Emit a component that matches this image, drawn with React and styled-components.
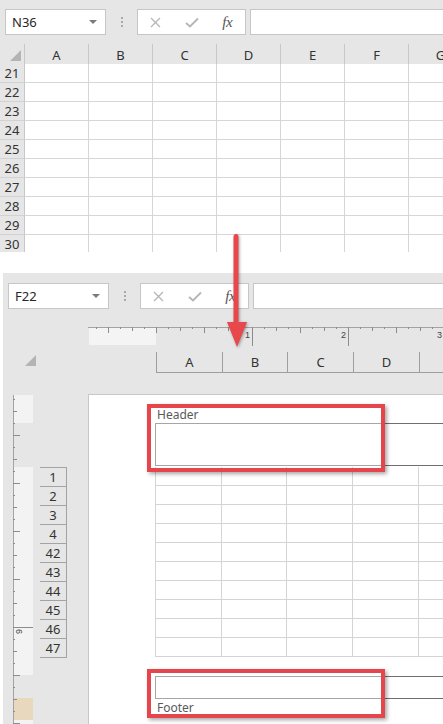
import React from "react";
import styled, { createGlobalStyle } from "styled-components";

const Global = createGlobalStyle`
  * { box-sizing: border-box; }
  html, body { margin: 0; padding: 0; background: #fff; }
  body { width: 443px; height: 724px; overflow: hidden; font-family: "Segoe UI", "Noto Sans", "Open Sans", sans-serif; color: #333; }
`;

const Root = styled.div`
  position: relative;
  width: 443px;
  height: 724px;
  overflow: hidden;
  display: flex;
  flex-direction: column;
`;

const Panel = styled.div`
  background: #e6e6e6;
  overflow: hidden;
  margin-left: ${(p) => p.$left || 0}px;
  height: ${(p) => p.$h}px;
  flex: none;
  display: flex;
  flex-direction: column;
`;

const WhiteGap = styled.div`
  height: 21px;
  flex: none;
  background: #fff;
`;

/* ---------- toolbar ---------- */
const Toolbar = styled.div`
  height: 44px;
  flex: none;
  display: flex;
  align-items: flex-start;
  padding: ${(p) => p.$top}px 0 0 5px;
`;

const NameBox = styled.div`
  width: 101px;
  height: 26px;
  background: #fff;
  border: 1px solid #c6c6c6;
  display: flex;
  align-items: center;
  justify-content: space-between;
  padding: 0 8px 0 6px;
  font-size: 13px;
  color: #262626;
`;

const Caret = styled.span`
  width: 0;
  height: 0;
  border-left: 4px solid transparent;
  border-right: 4px solid transparent;
  border-top: 4px solid #7b7b7b;
`;

const DotsSep = styled.div`
  width: 31px;
  height: 26px;
  display: flex;
  flex-direction: column;
  align-items: center;
  justify-content: center;
  gap: 2px;
`;

const Dot = styled.span`
  width: 2px;
  height: 2px;
  background: #a9a9a9;
`;

const FxGroup = styled.div`
  width: 109px;
  height: 26px;
  background: #fff;
  border: 1px solid #c6c6c6;
  display: flex;
`;

const IconSlot = styled.div`
  width: 36px;
  height: 100%;
  display: flex;
  align-items: center;
  justify-content: center;
`;

const FxText = styled.i`
  font-family: "Liberation Serif", "DejaVu Serif", serif;
  font-size: 15px;
  color: #555;
  letter-spacing: -0.5px;
`;

const FormulaBar = styled.div`
  flex: 1;
  height: 26px;
  margin-left: 4px;
  background: #fff;
  border: 1px solid #c6c6c6;
  border-right: none;
`;

function FormulaToolbar({ name, top }) {
  return (
    <Toolbar $top={top}>
      <NameBox>
        <span>{name}</span>
        <Caret />
      </NameBox>
      <DotsSep>
        <Dot />
        <Dot />
        <Dot />
      </DotsSep>
      <FxGroup>
        <IconSlot>
          <svg width="11" height="11" viewBox="0 0 11 11">
            <path d="M1 1 L10 10 M10 1 L1 10" stroke="#b5b5b5" strokeWidth="1.3" fill="none" />
          </svg>
        </IconSlot>
        <IconSlot>
          <svg width="14" height="11" viewBox="0 0 14 11">
            <path d="M1 6 L5 9.5 L13 1.5" stroke="#b5b5b5" strokeWidth="1.8" fill="none" />
          </svg>
        </IconSlot>
        <IconSlot>
          <FxText>fx</FxText>
        </IconSlot>
      </FxGroup>
      <FormulaBar />
    </Toolbar>
  );
}

/* ---------- top sheet (normal view) ---------- */
const Sheet = styled.div`
  display: grid;
  grid-template-columns: 25px repeat(7, 64px);
  grid-template-rows: 20px repeat(10, 19px);
  width: 473px;
`;

const Corner = styled.div`
  border-right: 1px solid #c8c8c8;
  display: flex;
  align-items: flex-end;
  justify-content: flex-end;
  padding: 0 3px 3px 0;
`;

const Triangle = styled.span`
  width: 0;
  height: 0;
  border-left: ${(p) => p.$s}px solid transparent;
  border-bottom: ${(p) => p.$s}px solid #b4b4b4;
`;

const ColHead = styled.div`
  border-right: 1px solid #c8c8c8;
  display: flex;
  align-items: center;
  justify-content: center;
  font-size: 13px;
  color: #333;
  padding-top: 1px;
`;

const RowHead = styled.div`
  border-right: 1px solid #c8c8c8;
  border-bottom: 1px solid #d2d2d2;
  display: flex;
  align-items: center;
  justify-content: center;
  font-size: 13px;
  line-height: 15px;
  color: #333;
`;

const Cell = styled.div`
  background: #fff;
  border-right: 1px solid #d6d6d6;
  border-bottom: 1px solid #d6d6d6;
`;

/* ---------- page layout view ---------- */
const LayoutBody = styled.div`
  flex: 1;
  display: grid;
  grid-template-columns: 85px 1fr;
  grid-template-rows: 77px 1fr;
`;

const TopLeft = styled.div`
  padding: 16px 0 0 22px;
`;

const TopRight = styled.div`
  display: flex;
  flex-direction: column;
  padding-top: 10px;
`;

const RulerBox = styled.div`
  height: 19px;
  line-height: 0;
`;

const PageColHeads = styled.div`
  margin-top: 6px;
  margin-left: 68px;
  display: flex;
  height: 21px;
  overflow: hidden;
`;

const PageColHead = styled.div`
  flex: none;
  width: ${(p) => p.$w}px;
  border-left: 1px solid #9e9e9e;
  border-bottom: 1px solid #9e9e9e;
  display: flex;
  align-items: center;
  justify-content: center;
  font-size: 13px;
  color: #333;
`;

const LeftGutter = styled.div`
  display: flex;
  padding-left: 10px;
`;

const VRulerBox = styled.div`
  width: 20px;
  margin-top: 1px;
  line-height: 0;
`;

const RowNums = styled.div`
  margin-left: 7px;
  margin-top: 73px;
  width: 27px;
  border-top: 1px solid #a3a3a3;
  align-self: flex-start;
`;

const RowNum = styled.div`
  height: 19px;
  border-right: 1px solid #a3a3a3;
  border-bottom: 1px solid #a3a3a3;
  display: flex;
  align-items: center;
  justify-content: center;
  font-size: 13px;
  color: #333;
`;

const Page = styled.div`
  position: relative;
  background: #fff;
  border-top: 1px solid #c8c8c8;
  border-left: 1px solid #c8c8c8;
  padding-left: 66px;
  overflow: hidden;
`;

const HFLabel = styled.div`
  font-size: 12px;
  line-height: 14px;
  color: #595959;
  padding-left: 2px;
  margin-top: ${(p) => p.$mt}px;
`;

const HFBox = styled.div`
  display: flex;
  height: ${(p) => p.$h}px;
  margin-top: ${(p) => p.$mt}px;
`;

const HFSection = styled.div`
  flex: ${(p) => (p.$w ? `0 0 ${p.$w}px` : "1")};
  border-top: 1px solid ${(p) => (p.$dark ? "#6f6f6f" : "#a6a6a6")};
  border-bottom: 1px solid ${(p) => (p.$dark ? "#6f6f6f" : "#a6a6a6")};
  border-left: ${(p) => (p.$first ? "1px solid #a6a6a6" : "none")};
`;

const PageGrid = styled.div`
  margin-top: 1px;
  display: grid;
  grid-template-columns: 66px 65px 66px 66px 1fr;
  grid-template-rows: repeat(10, 19px);
  border-left: 1px solid #d4d4d4;
`;

const PageCell = styled.div`
  border-right: 1px solid #d4d4d4;
  border-bottom: 1px solid #d4d4d4;
`;

const RedFrame = styled.div`
  position: absolute;
  left: 58px;
  width: 238px;
  top: ${(p) => p.$top}px;
  height: ${(p) => p.$h}px;
  border: 4px solid #e5464b;
  box-shadow: 2px 2px 4px rgba(0, 0, 0, 0.35);
`;

const ArrowSvg = styled.svg`
  position: absolute;
  left: 224px;
  top: 230px;
  overflow: visible;
  filter: drop-shadow(1px 1px 1.5px rgba(0, 0, 0, 0.35));
`;

function HRuler() {
  const items = [];
  for (let k = -5; k <= 24; k++) {
    const x = 68 + 12 * k + 0.5;
    let len = 2;
    if (k % 8 === 0 && k > 0) len = 19;
    else if (k % 4 === 0) len = 6;
    else if (k % 2 === 0) len = 4;
    items.push(<line key={k} x1={x} y1={0} x2={x} y2={len} stroke="#8c8c8c" strokeWidth="1" />);
  }
  const labels = [
    { n: "1", x: 162 },
    { n: "2", x: 258 },
    { n: "3", x: 354 },
  ];
  return (
    <svg width="355" height="19" viewBox="0 0 355 19">
      <rect x="1" y="1" width="67" height="17" fill="#f4f4f4" />
      <line x1="0" y1="0.5" x2="355" y2="0.5" stroke="#a3a3a3" />
      {items}
      {labels.map((l) => (
        <text key={l.n} x={l.x} y="11" fontSize="9" fill="#444" textAnchor="end" fontFamily="Liberation Sans, Arial, sans-serif">
          {l.n}
        </text>
      ))}
    </svg>
  );
}

function VRuler() {
  const items = [];
  for (let k = -20; k <= 8; k++) {
    const y = 232 + 12 * k + 0.5;
    let len = 2;
    if (k === 0) len = 20;
    else if (k % 4 === 0) len = 7;
    else if (k % 2 === 0) len = 4;
    items.push(<line key={k} x1={0} y1={y} x2={len} y2={y} stroke="#8c8c8c" strokeWidth="1" />);
  }
  return (
    <svg width="20" height="329" viewBox="0 0 20 329">
      <rect x="1" y="0" width="19" height="28" fill="#f3f3f3" />
      <rect x="1" y="72" width="19" height="208" fill="#f3f3f3" />
      <rect x="1" y="303" width="19" height="22" fill="#e8d8bd" />
      <rect x="1" y="325" width="19" height="4" fill="#f3f3f3" />
      <line x1="0.5" y1="0" x2="0.5" y2="329" stroke="#a3a3a3" />
      {items}
      <text transform="translate(3,234) rotate(90)" fontSize="9" fill="#444" fontFamily="Liberation Sans, Arial, sans-serif">
        6
      </text>
    </svg>
  );
}

const topCols = ["A", "B", "C", "D", "E", "F", "G"];
const topRows = [21, 22, 23, 24, 25, 26, 27, 28, 29, 30];
const pageCols = [
  { l: "A", w: 66 },
  { l: "B", w: 65 },
  { l: "C", w: 66 },
  { l: "D", w: 66 },
  { l: "", w: 66 },
];
const pageRows = [1, 2, 3, 4, 42, 43, 44, 45, 46, 47];

export default function App() {
  return (
    <Root>
      <Global />
      <Panel $h={252}>
        <FormulaToolbar name="N36" top={9} />
        <Sheet>
          <Corner>
            <Triangle $s={11} />
          </Corner>
          {topCols.map((c) => (
            <ColHead key={c}>{c}</ColHead>
          ))}
          {topRows.map((r) => (
            <React.Fragment key={r}>
              <RowHead>{r}</RowHead>
              {topCols.map((c) => (
                <Cell key={c} />
              ))}
            </React.Fragment>
          ))}
        </Sheet>
      </Panel>
      <WhiteGap />
      <Panel $h={451} $left={3}>
        <FormulaToolbar name="F22" top={10} />
        <LayoutBody>
          <TopLeft>
            <Triangle $s={11} />
          </TopLeft>
          <TopRight>
            <RulerBox>
              <HRuler />
            </RulerBox>
            <PageColHeads>
              {pageCols.map((c, i) => (
                <PageColHead key={i} $w={c.w}>
                  {c.l}
                </PageColHead>
              ))}
            </PageColHeads>
          </TopRight>
          <LeftGutter>
            <VRulerBox>
              <VRuler />
            </VRulerBox>
            <RowNums>
              {pageRows.map((r) => (
                <RowNum key={r}>{r}</RowNum>
              ))}
            </RowNums>
          </LeftGutter>
          <Page>
            <HFLabel $mt={13}>Header</HFLabel>
            <HFBox $h={43} $mt={1}>
              <HFSection $w={228} $first />
              <HFSection $dark />
            </HFBox>
            <PageGrid>
              {pageRows.map((r) => (
                <React.Fragment key={r}>
                  {pageCols.map((c, i) => (
                    <PageCell key={i} />
                  ))}
                </React.Fragment>
              ))}
            </PageGrid>
            <HFBox $h={23} $mt={19}>
              <HFSection $w={228} $first />
              <HFSection $dark />
            </HFBox>
            <HFLabel $mt={2}>Footer</HFLabel>
            <RedFrame $top={9} $h={68} />
            <RedFrame $top={274} $h={49} />
          </Page>
        </LayoutBody>
      </Panel>
      <ArrowSvg width="26" height="122" viewBox="0 0 26 122">
        <path d="M9.5 7 Q9.5 4 12 4 Q14.5 4 14.5 7 L14.5 93 L9.5 93 Z" fill="#e8474c" />
        <polygon points="3,92 23,92 13,117" fill="#e8474c" />
      </ArrowSvg>
    </Root>
  );
}
